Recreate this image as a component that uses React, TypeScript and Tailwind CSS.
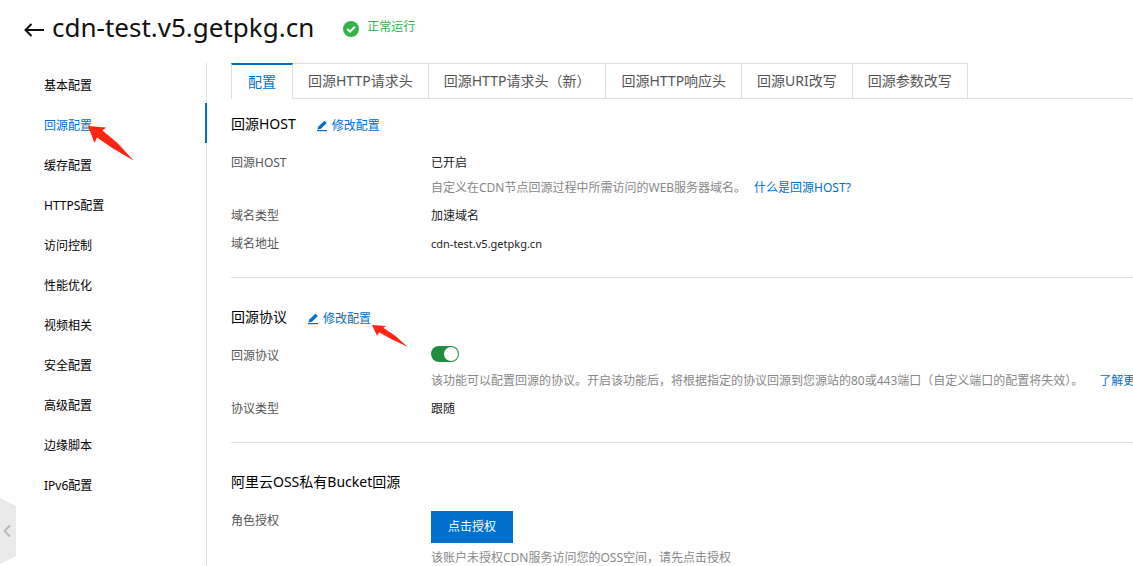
import { useState } from 'react';

const menuItems = [
  '基本配置',
  '回源配置',
  '缓存配置',
  'HTTPS配置',
  '访问控制',
  '性能优化',
  '视频相关',
  '安全配置',
  '高级配置',
  '边缘脚本',
  'IPv6配置',
];

const tabs = [
  '配置',
  '回源HTTP请求头',
  '回源HTTP请求头（新）',
  '回源HTTP响应头',
  '回源URI改写',
  '回源参数改写',
];

function EditLink() {
  return (
    <a href="#edit" className="flex items-center gap-1 pt-1 text-xs leading-5 text-[#0070cc]">
      <svg width="12" height="12" viewBox="0 0 12 12" fill="currentColor" aria-hidden="true">
        <path d="M8.4 0.8 10.8 3 5 8.8 1.4 9.4 2.4 6.6z" />
        <path d="M1 10h10v1.2H1z" />
      </svg>
      修改配置
    </a>
  );
}

// Red pointer drawn on top of the page
function Pointer({ className }: { className: string }) {
  return (
    <svg viewBox="0 0 46 35" preserveAspectRatio="none" className={className} fill="#ff2414" aria-hidden="true">
      <path d="M0 0 18 1.5 14.5 4.5 30 17.5 45.5 34.5 25 22.5 9 11.5 6.5 17z" />
    </svg>
  );
}

function SectionTitle({ title, editable }: { title: string; editable?: boolean }) {
  return (
    <div className="mb-[19px] flex h-5 items-center gap-5">
      <h2 className="text-sm leading-5 text-black">{title}</h2>
      {editable && <EditLink />}
    </div>
  );
}

function Row({ label, htmlFor, children }: { label: string; htmlFor?: string; children: React.ReactNode }) {
  return (
    <div className="flex">
      <div className="w-[200px] shrink-0 text-[#555]">
        {htmlFor ? <label htmlFor={htmlFor}>{label}</label> : label}
      </div>
      <div className="min-w-0 flex-1 text-[#222]">{children}</div>
    </div>
  );
}

export default function App() {
  const [active, setActive] = useState('回源配置');
  const [tab, setTab] = useState('配置');
  const [enabled, setEnabled] = useState(true);

  return (
    <div className="relative flex h-screen flex-col overflow-hidden bg-white font-['Noto_Sans','Noto_Sans_CJK_SC',sans-serif] text-xs leading-5">
      <header className="flex h-[63px] shrink-0 items-start px-6 pt-[7px]">
        <button type="button" aria-label="返回" className="mt-[13px] mr-2">
          <svg width="20" height="20" viewBox="0 0 20 20" fill="none" stroke="#111" strokeWidth="2" aria-hidden="true">
            <path d="M20 10H2M7.5 4 1.5 10 7.5 16" />
          </svg>
        </button>
        <h1 className="text-[26px] leading-10 text-[#111]">cdn-test.v5.getpkg.cn</h1>
        <div className="mt-[10px] ml-[29px] flex items-center gap-2 text-[#35b34a]">
          <svg width="16" height="16" viewBox="0 0 16 16" className="mt-[3px]" aria-hidden="true">
            <circle cx="8" cy="8" r="8" fill="#35b34a" />
            <path d="M4.2 8 7 10.6 11.8 5.8" fill="none" stroke="#fff" strokeWidth="2" />
          </svg>
          正常运行
        </div>
      </header>

      <div className="flex min-h-0 flex-1">
        <nav className="w-[207px] shrink-0 border-r border-[#dedede]">
          {menuItems.map((item) => (
            <div key={item} className="relative">
              <a
                href="#menu"
                onClick={() => setActive(item)}
                className={
                  item === active
                    ? '-mr-px block h-10 border-r-2 border-[#0070cc] pt-[13px] pl-11 text-[#0070cc]'
                    : 'block h-10 pt-[13px] pl-11 text-black'
                }
              >
                {item}
              </a>
              {item === '回源配置' && (
                <Pointer className="pointer-events-none absolute top-[23px] left-[88px] h-[35px] w-[46px]" />
              )}
            </div>
          ))}
        </nav>

        <main className="min-w-0 flex-1 overflow-hidden pl-6">
          <div role="tablist" className="flex h-9 border-b border-[#dedede] text-sm">
            {tabs.map((name) => (
              <button
                key={name}
                type="button"
                role="tab"
                aria-selected={name === tab}
                onClick={() => setTab(name)}
                className={
                  name === tab
                    ? 'h-9 border-x border-t-2 border-x-[#dedede] border-t-[#0070cc] bg-white px-4 pb-px whitespace-nowrap text-[#0070cc]'
                    : 'h-9 border-t border-r border-b border-[#dedede] px-[15px] whitespace-nowrap text-[#555]'
                }
              >
                {name}
              </button>
            ))}
          </div>

          <section className="border-b border-[#dedede] pt-[15px] pb-[23px]">
            <SectionTitle title="回源HOST" editable />
            <div className="space-y-2">
              <Row label="回源HOST">
                <p>已开启</p>
                <p className="mt-[5px] whitespace-nowrap text-[#888]">
                  自定义在CDN节点回源过程中所需访问的WEB服务器域名。
                  <a href="#host" className="ml-2 text-[#0070cc]">什么是回源HOST?</a>
                </p>
              </Row>
              <Row label="域名类型">加速域名</Row>
              <Row label="域名地址">
                <span className="text-[11px]">cdn-test.v5.getpkg.cn</span>
              </Row>
            </div>
          </section>

          <section className="border-b border-[#dedede] pt-[29px] pb-[23px]">
            <div className="relative">
              <SectionTitle title="回源协议" editable />
              <Pointer className="pointer-events-none absolute top-[18px] left-[141px] h-[22px] w-[36px]" />
            </div>
            <div className="space-y-2">
              <Row label="回源协议" htmlFor="protocol">
                <div className="flex h-5 items-start">
                  <input
                    id="protocol"
                    type="checkbox"
                    role="switch"
                    checked={enabled}
                    onChange={(e) => setEnabled(e.target.checked)}
                    className="h-4 w-7 appearance-none rounded-full bg-gray-300 p-px before:block before:size-3.5 before:rounded-full before:bg-white checked:bg-[#1e8e3e] checked:before:ml-3"
                  />
                </div>
                <p className="mt-[5px] whitespace-nowrap text-[#888]">
                  该功能可以配置回源的协议。开启该功能后，将根据指定的协议回源到您源站的80或443端口（自定义端口的配置将失效）。
                  <a href="#more" className="ml-4 text-[#0070cc]">了解更多</a>
                </p>
              </Row>
              <Row label="协议类型">跟随</Row>
            </div>
          </section>

          <section className="pt-[29px]">
            <SectionTitle title="阿里云OSS私有Bucket回源" />
            <Row label="角色授权">
              <button type="button" className="h-8 bg-[#0070cc] px-[17px] text-white">
                点击授权
              </button>
              <p className="mt-[5px] text-[#888]">该账户未授权CDN服务访问您的OSS空间，请先点击授权</p>
            </Row>
          </section>
        </main>
      </div>

      <button type="button" aria-label="收起" className="absolute bottom-0.5 left-0">
        <svg width="16" height="66" viewBox="0 0 16 66" aria-hidden="true">
          <path d="M0 0 16 8V58L0 66z" fill="#eaeaea" />
          <path d="M10 27.5 4.5 33 10 38.5" fill="none" stroke="#b8b8b8" strokeWidth="2" />
        </svg>
      </button>
    </div>
  );
}
